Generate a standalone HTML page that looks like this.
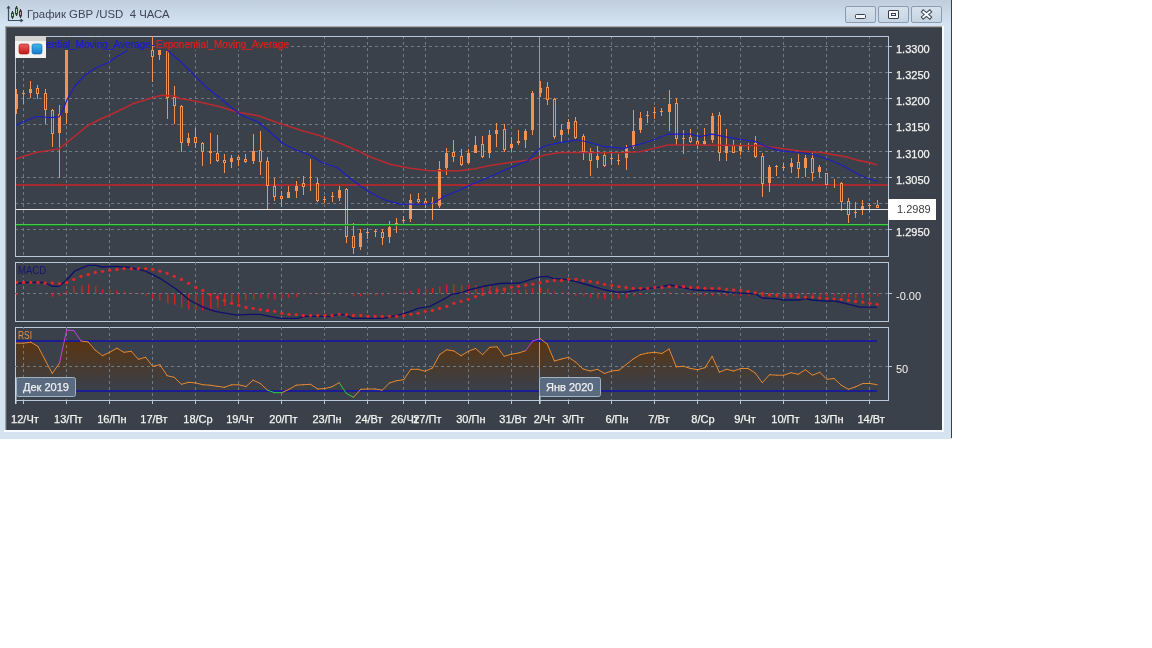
<!DOCTYPE html>
<html><head><meta charset="utf-8"><style>
html,body{margin:0;padding:0;background:#fff;width:1152px;height:648px;overflow:hidden;font-family:"Liberation Sans",sans-serif}
#win{position:absolute;left:0;top:0;width:952px;height:439px;background:linear-gradient(#c0cedc,#d4e4f2 25px,#d5e3f1 30px);}
#rb{position:absolute;left:951px;top:0;width:1px;height:438px;background:#3c3c44}
#title{position:absolute;left:27px;top:8px;will-change:transform;font-size:11.4px;color:#404458;white-space:pre}
#dark{position:absolute;left:5px;top:26px;width:937px;height:404px;background:#3a414a;}
#wl{position:absolute;left:942px;top:26px;width:2px;height:406px;background:#f8fbff}
#wb{position:absolute;left:4px;top:430px;width:940px;height:2px;background:#f8fbff}
.btn{position:absolute;top:6px;width:29px;height:15px;border:1px solid #8c9cae;border-radius:2px;background:linear-gradient(#d6e1ec,#c6d4e3)}
</style></head><body>
<div id="win">
<div id="rb"></div>
<svg width="28" height="26" style="position:absolute;left:0;top:0" viewBox="0 0 28 26">
<path d="M8.5 6.5V20.5H22.5" stroke="#3c4c5c" stroke-width="1.2" fill="none"/>
<path d="M7 8.5L8.5 6.5L10 8.5" stroke="#3c4c5c" stroke-width="1.1" fill="none"/>
<path d="M20.5 19L22.5 20.5L20.5 22" stroke="#3c4c5c" stroke-width="1.1" fill="none"/>
<path d="M12.5 11V19M16.5 6V16M20.5 9V18" stroke="#2c3830" stroke-width="1.1"/>
<rect x="11.5" y="13" width="2" height="4" fill="#b8dcb8" stroke="#2c4a30" stroke-width="1"/>
<rect x="15.5" y="8" width="2" height="6" fill="#b8dcb8" stroke="#2c4a30" stroke-width="1"/>
<rect x="19.5" y="11" width="2" height="5" fill="#c8a0b0" stroke="#4a3040" stroke-width="1"/>
</svg>
<div id="title">График GBP /USD  4 ЧАСА</div>
<div class="btn" style="left:845px"><div style="position:absolute;left:9px;top:7px;width:9px;height:3px;border:1px solid #384050;border-radius:1.5px;background:#f4f6f8"></div></div>
<div class="btn" style="left:878px"><div style="position:absolute;left:9px;top:3px;width:9px;height:7px;border:1px solid #384050;border-radius:1px;background:#f4f6f8"><div style="position:absolute;left:2px;top:2px;width:3px;height:1px;border:1px solid #384050"></div></div></div>
<div class="btn" style="left:911px"><svg width="29" height="15" style="position:absolute;left:0;top:0"><path d="M11.3 4.8L17.7 10.2M17.7 4.8L11.3 10.2" stroke="#384050" stroke-width="3.8" stroke-linecap="square"/><path d="M11.3 4.8L17.7 10.2M17.7 4.8L11.3 10.2" stroke="#f6f8fa" stroke-width="1.9" stroke-linecap="square"/></svg></div>
<div id="dark"></div>
<div id="wl"></div><div id="wb"></div><div style="position:absolute;left:5px;top:26px;width:937px;height:1px;background:#a4a6a8"></div><div style="position:absolute;left:6px;top:27px;width:936px;height:1px;background:#5a5c60"></div><div style="position:absolute;left:7px;top:28px;width:935px;height:1px;background:#363c44"></div><div style="position:absolute;left:5px;top:26px;width:1px;height:404px;background:#9ea2a6"></div><div style="position:absolute;left:6px;top:27px;width:1px;height:403px;background:#5a5e62"></div><div style="position:absolute;left:7px;top:28px;width:1px;height:402px;background:#383e46"></div>
<svg width="952" height="438" viewBox="0 0 952 438" style="position:absolute;left:0;top:0;will-change:transform"><defs><clipPath id="cpMain"><rect x="16" y="37" width="872" height="219"/></clipPath><clipPath id="cpBody"><rect x="16" y="50" width="872" height="206"/></clipPath><clipPath id="cpMacd"><rect x="16" y="263" width="872" height="58"/></clipPath><clipPath id="cpRsi"><rect x="16" y="328" width="872" height="72"/></clipPath><clipPath id="cpRsiFill"><rect x="16" y="341" width="872" height="50"/></clipPath><linearGradient id="gRsi" x1="0" y1="341" x2="0" y2="392" gradientUnits="userSpaceOnUse"><stop offset="0" stop-color="#5a3410"/><stop offset="0.45" stop-color="#4a3a2c"/><stop offset="0.85" stop-color="#3d3f45"/><stop offset="1" stop-color="#3a414a"/></linearGradient><linearGradient id="gSq1" x1="0" y1="0" x2="0" y2="1"><stop offset="0" stop-color="#f06060"/><stop offset="1" stop-color="#c01818"/></linearGradient><linearGradient id="gSq2" x1="0" y1="0" x2="0" y2="1"><stop offset="0" stop-color="#40b8f0"/><stop offset="1" stop-color="#1878c8"/></linearGradient></defs><path d="M23.5 36V256 M66.5 36V256 M109.5 36V256 M152.5 36V256 M195.5 36V256 M238.5 36V256 M281.5 36V256 M324.5 36V256 M367.5 36V256 M403.5 36V256 M425.5 36V256 M468.5 36V256 M511.5 36V256 M568.5 36V256 M611.5 36V256 M654.5 36V256 M697.5 36V256 M740.5 36V256 M783.5 36V256 M826.5 36V256 M869.5 36V256" stroke="#6e7a84" stroke-width="1" stroke-dasharray="3 3" fill="none" shape-rendering="crispEdges"/><path d="M15 46.5H888 M15 72.5H888 M15 98.5H888 M15 124.5H888 M15 151.5H888 M15 177.5H888 M15 203.5H888 M15 229.5H888" stroke="#6e7a84" stroke-width="1" stroke-dasharray="3 3" fill="none" shape-rendering="crispEdges"/><rect x="539" y="37" width="1" height="219" fill="#8e9cac"/><rect x="16" y="184" width="872" height="2" fill="#a82a30"/><g clip-path="url(#cpBody)" shape-rendering="crispEdges"><rect x="16" y="89.3" width="1" height="25.0" fill="#f39252"/><rect x="15" y="93.5" width="3" height="15.8" fill="#f39252"/><rect x="23" y="90.0" width="1" height="14.0" fill="#f39252"/><rect x="22" y="93.0" width="3" height="1" fill="#f39252"/><rect x="30" y="81.0" width="1" height="16.7" fill="#f39252"/><rect x="29" y="88.5" width="3" height="4.2" fill="#f39252"/><rect x="37" y="85.0" width="1" height="13.5" fill="#f39252"/><rect x="36.5" y="88.5" width="2" height="4.5" fill="#3a414a" stroke="#f39252" stroke-width="1"/><rect x="45" y="89.3" width="1" height="34.2" fill="#f39252"/><rect x="44.5" y="93.2" width="2" height="16.3" fill="#3a414a" stroke="#f39252" stroke-width="1"/><rect x="52" y="108.5" width="1" height="38.0" fill="#f39252"/><rect x="51.5" y="110.5" width="2" height="23.0" fill="#3a414a" stroke="#f39252" stroke-width="1"/><rect x="59" y="105.0" width="1" height="73.0" fill="#f39252"/><rect x="58" y="114.0" width="3" height="18.7" fill="#f39252"/><rect x="66" y="50.0" width="1" height="73.5" fill="#f39252"/><rect x="65" y="50.0" width="3" height="62.7" fill="#f39252"/><rect x="152" y="50.0" width="1" height="31.8" fill="#f39252"/><rect x="151.5" y="50.5" width="2" height="6.0" fill="#3a414a" stroke="#f39252" stroke-width="1"/><rect x="159" y="50.0" width="1" height="10.0" fill="#f39252"/><rect x="158" y="50.0" width="3" height="5.0" fill="#f39252"/><rect x="167" y="50.0" width="1" height="69.0" fill="#f39252"/><rect x="166.5" y="51.5" width="2" height="45.7" fill="#3a414a" stroke="#f39252" stroke-width="1"/><rect x="174" y="86.0" width="1" height="37.5" fill="#f39252"/><rect x="173.5" y="97.5" width="2" height="8.0" fill="#3a414a" stroke="#f39252" stroke-width="1"/><rect x="181" y="105.0" width="1" height="46.7" fill="#f39252"/><rect x="180.5" y="106.5" width="2" height="36.3" fill="#3a414a" stroke="#f39252" stroke-width="1"/><rect x="188" y="132.5" width="1" height="13.3" fill="#f39252"/><rect x="187" y="137.5" width="3" height="5.0" fill="#f39252"/><rect x="195" y="127.5" width="1" height="20.0" fill="#f39252"/><rect x="194.5" y="137.2" width="2" height="5.6" fill="#3a414a" stroke="#f39252" stroke-width="1"/><rect x="202" y="141.7" width="1" height="24.1" fill="#f39252"/><rect x="201.5" y="143.0" width="2" height="8.2" fill="#3a414a" stroke="#f39252" stroke-width="1"/><rect x="210" y="132.5" width="1" height="31.7" fill="#f39252"/><rect x="209.5" y="151.3" width="2" height="1.5" fill="#3a414a" stroke="#f39252" stroke-width="1"/><rect x="217" y="135.0" width="1" height="26.7" fill="#f39252"/><rect x="216.5" y="153.0" width="2" height="7.3" fill="#3a414a" stroke="#f39252" stroke-width="1"/><rect x="224" y="154.2" width="1" height="19.1" fill="#f39252"/><rect x="223.5" y="160.5" width="2" height="1.5" fill="#3a414a" stroke="#f39252" stroke-width="1"/><rect x="231" y="155.0" width="1" height="12.5" fill="#f39252"/><rect x="230" y="158.3" width="3" height="3.4" fill="#f39252"/><rect x="238" y="155.0" width="1" height="10.8" fill="#f39252"/><rect x="237.5" y="157.5" width="2" height="2.0" fill="#3a414a" stroke="#f39252" stroke-width="1"/><rect x="245" y="154.2" width="1" height="8.3" fill="#f39252"/><rect x="244.5" y="159.7" width="2" height="1.5" fill="#3a414a" stroke="#f39252" stroke-width="1"/><rect x="253" y="134.2" width="1" height="30.0" fill="#f39252"/><rect x="252" y="150.8" width="3" height="10.0" fill="#f39252"/><rect x="260" y="130.8" width="1" height="44.2" fill="#f39252"/><rect x="259.5" y="150.5" width="2" height="10.7" fill="#3a414a" stroke="#f39252" stroke-width="1"/><rect x="267" y="156.7" width="1" height="52.5" fill="#f39252"/><rect x="266.5" y="161.3" width="2" height="24.0" fill="#3a414a" stroke="#f39252" stroke-width="1"/><rect x="274" y="178.3" width="1" height="22.5" fill="#f39252"/><rect x="273.5" y="186.3" width="2" height="9.9" fill="#3a414a" stroke="#f39252" stroke-width="1"/><rect x="281" y="190.8" width="1" height="15.9" fill="#f39252"/><rect x="280.5" y="196.3" width="2" height="1.9" fill="#3a414a" stroke="#f39252" stroke-width="1"/><rect x="288" y="185.8" width="1" height="12.5" fill="#f39252"/><rect x="287" y="191.7" width="3" height="5.8" fill="#f39252"/><rect x="296" y="180.8" width="1" height="16.7" fill="#f39252"/><rect x="295" y="185.8" width="3" height="5.0" fill="#f39252"/><rect x="303" y="175.8" width="1" height="19.2" fill="#f39252"/><rect x="302.5" y="183.8" width="2" height="2.4" fill="#3a414a" stroke="#f39252" stroke-width="1"/><rect x="310" y="159.2" width="1" height="31.6" fill="#f39252"/><rect x="309" y="177.0" width="3" height="1" fill="#f39252"/><rect x="317" y="178.3" width="1" height="23.4" fill="#f39252"/><rect x="316.5" y="183.8" width="2" height="16.5" fill="#3a414a" stroke="#f39252" stroke-width="1"/><rect x="324" y="195.8" width="1" height="7.5" fill="#f39252"/><rect x="323" y="199.0" width="3" height="1" fill="#f39252"/><rect x="332" y="191.7" width="1" height="10.0" fill="#f39252"/><rect x="331" y="196.0" width="3" height="1" fill="#f39252"/><rect x="339" y="185.8" width="1" height="15.0" fill="#f39252"/><rect x="338" y="190.0" width="3" height="8.0" fill="#f39252"/><rect x="346" y="188.3" width="1" height="54.2" fill="#f39252"/><rect x="345.5" y="189.7" width="2" height="46.5" fill="#3a414a" stroke="#f39252" stroke-width="1"/><rect x="353" y="223.3" width="1" height="30.9" fill="#f39252"/><rect x="352.5" y="236.3" width="2" height="11.5" fill="#3a414a" stroke="#f39252" stroke-width="1"/><rect x="360" y="229.2" width="1" height="20.8" fill="#f39252"/><rect x="359" y="232.5" width="3" height="14.2" fill="#f39252"/><rect x="367" y="228.3" width="1" height="10.9" fill="#f39252"/><rect x="366" y="232.0" width="3" height="1" fill="#f39252"/><rect x="375" y="229.2" width="1" height="7.5" fill="#f39252"/><rect x="374" y="231.0" width="3" height="1" fill="#f39252"/><rect x="382" y="229.2" width="1" height="15.8" fill="#f39252"/><rect x="381.5" y="232.2" width="2" height="5.6" fill="#3a414a" stroke="#f39252" stroke-width="1"/><rect x="389" y="220.8" width="1" height="21.7" fill="#f39252"/><rect x="388" y="226.7" width="3" height="10.0" fill="#f39252"/><rect x="396" y="218.3" width="1" height="14.2" fill="#f39252"/><rect x="395" y="223.3" width="3" height="2.0" fill="#f39252"/><rect x="403" y="215.8" width="1" height="6.7" fill="#f39252"/><rect x="402" y="220.0" width="3" height="1" fill="#f39252"/><rect x="410" y="194.2" width="1" height="27.5" fill="#f39252"/><rect x="409" y="200.0" width="3" height="19.2" fill="#f39252"/><rect x="418" y="193.3" width="1" height="10.0" fill="#f39252"/><rect x="417.5" y="199.7" width="2" height="1.8" fill="#3a414a" stroke="#f39252" stroke-width="1"/><rect x="425" y="198.3" width="1" height="10.0" fill="#f39252"/><rect x="424.5" y="201.3" width="2" height="2.4" fill="#3a414a" stroke="#f39252" stroke-width="1"/><rect x="432" y="196.7" width="1" height="23.3" fill="#f39252"/><rect x="431.5" y="202.2" width="2" height="1.0" fill="#3a414a" stroke="#f39252" stroke-width="1"/><rect x="439" y="160.8" width="1" height="46.7" fill="#f39252"/><rect x="438" y="169.2" width="3" height="36.6" fill="#f39252"/><rect x="446" y="147.5" width="1" height="27.5" fill="#f39252"/><rect x="445" y="152.5" width="3" height="15.8" fill="#f39252"/><rect x="453" y="140.0" width="1" height="21.7" fill="#f39252"/><rect x="452.5" y="152.2" width="2" height="4.0" fill="#3a414a" stroke="#f39252" stroke-width="1"/><rect x="461" y="149.2" width="1" height="16.6" fill="#f39252"/><rect x="460.5" y="156.3" width="2" height="8.2" fill="#3a414a" stroke="#f39252" stroke-width="1"/><rect x="468" y="149.2" width="1" height="15.0" fill="#f39252"/><rect x="467" y="152.5" width="3" height="10.0" fill="#f39252"/><rect x="475" y="135.8" width="1" height="17.5" fill="#f39252"/><rect x="474" y="145.0" width="3" height="7.5" fill="#f39252"/><rect x="482" y="135.8" width="1" height="22.5" fill="#f39252"/><rect x="481.5" y="144.7" width="2" height="11.5" fill="#3a414a" stroke="#f39252" stroke-width="1"/><rect x="489" y="130.0" width="1" height="28.3" fill="#f39252"/><rect x="488" y="135.0" width="3" height="18.3" fill="#f39252"/><rect x="496" y="123.3" width="1" height="23.4" fill="#f39252"/><rect x="495" y="130.0" width="3" height="4.2" fill="#f39252"/><rect x="504" y="124.2" width="1" height="27.5" fill="#f39252"/><rect x="503.5" y="129.7" width="2" height="19.8" fill="#3a414a" stroke="#f39252" stroke-width="1"/><rect x="511" y="136.7" width="1" height="15.0" fill="#f39252"/><rect x="510" y="144.2" width="3" height="4.1" fill="#f39252"/><rect x="518" y="130.0" width="1" height="15.0" fill="#f39252"/><rect x="517" y="140.8" width="3" height="2.5" fill="#f39252"/><rect x="525" y="129.2" width="1" height="18.3" fill="#f39252"/><rect x="524" y="130.8" width="3" height="9.2" fill="#f39252"/><rect x="532" y="90.8" width="1" height="44.2" fill="#f39252"/><rect x="531" y="93.3" width="3" height="36.7" fill="#f39252"/><rect x="540" y="80.8" width="1" height="15.9" fill="#f39252"/><rect x="539" y="88.0" width="3" height="5.3" fill="#f39252"/><rect x="547" y="81.7" width="1" height="23.3" fill="#f39252"/><rect x="546.5" y="87.2" width="2" height="12.3" fill="#3a414a" stroke="#f39252" stroke-width="1"/><rect x="554" y="98.3" width="1" height="40.9" fill="#f39252"/><rect x="553.5" y="99.7" width="2" height="36.5" fill="#3a414a" stroke="#f39252" stroke-width="1"/><rect x="561" y="124.2" width="1" height="18.3" fill="#f39252"/><rect x="560" y="130.0" width="3" height="5.0" fill="#f39252"/><rect x="568" y="119.2" width="1" height="15.0" fill="#f39252"/><rect x="567" y="121.7" width="3" height="7.5" fill="#f39252"/><rect x="575" y="116.7" width="1" height="22.5" fill="#f39252"/><rect x="574.5" y="121.3" width="2" height="15.7" fill="#3a414a" stroke="#f39252" stroke-width="1"/><rect x="583" y="134.2" width="1" height="25.8" fill="#f39252"/><rect x="582.5" y="136.3" width="2" height="14.9" fill="#3a414a" stroke="#f39252" stroke-width="1"/><rect x="590" y="148.3" width="1" height="27.5" fill="#f39252"/><rect x="589.5" y="153.0" width="2" height="7.3" fill="#3a414a" stroke="#f39252" stroke-width="1"/><rect x="597" y="145.8" width="1" height="21.7" fill="#f39252"/><rect x="596" y="155.8" width="3" height="4.2" fill="#f39252"/><rect x="604" y="151.7" width="1" height="15.0" fill="#f39252"/><rect x="603.5" y="155.5" width="2" height="9.8" fill="#3a414a" stroke="#f39252" stroke-width="1"/><rect x="611" y="151.7" width="1" height="13.3" fill="#f39252"/><rect x="610" y="158.0" width="3" height="1" fill="#f39252"/><rect x="618" y="154.2" width="1" height="10.8" fill="#f39252"/><rect x="617" y="159.5" width="3" height="1" fill="#f39252"/><rect x="626" y="145.0" width="1" height="25.0" fill="#f39252"/><rect x="625" y="147.5" width="3" height="10.8" fill="#f39252"/><rect x="633" y="110.0" width="1" height="39.2" fill="#f39252"/><rect x="632" y="130.8" width="3" height="15.9" fill="#f39252"/><rect x="640" y="111.7" width="1" height="21.6" fill="#f39252"/><rect x="639" y="118.3" width="3" height="11.7" fill="#f39252"/><rect x="647" y="110.8" width="1" height="11.7" fill="#f39252"/><rect x="646" y="115.0" width="3" height="1" fill="#f39252"/><rect x="654" y="106.7" width="1" height="12.5" fill="#f39252"/><rect x="653" y="112.0" width="3" height="1" fill="#f39252"/><rect x="661" y="107.5" width="1" height="8.3" fill="#f39252"/><rect x="660" y="111.0" width="3" height="1" fill="#f39252"/><rect x="669" y="90.0" width="1" height="40.8" fill="#f39252"/><rect x="668" y="104.2" width="3" height="7.5" fill="#f39252"/><rect x="676" y="98.3" width="1" height="46.7" fill="#f39252"/><rect x="675.5" y="103.0" width="2" height="35.7" fill="#3a414a" stroke="#f39252" stroke-width="1"/><rect x="683" y="130.0" width="1" height="24.2" fill="#f39252"/><rect x="682" y="138.0" width="3" height="1" fill="#f39252"/><rect x="690" y="129.2" width="1" height="13.3" fill="#f39252"/><rect x="689.5" y="137.2" width="2" height="4.0" fill="#3a414a" stroke="#f39252" stroke-width="1"/><rect x="697" y="133.3" width="1" height="15.9" fill="#f39252"/><rect x="696.5" y="141.3" width="2" height="3.2" fill="#3a414a" stroke="#f39252" stroke-width="1"/><rect x="704" y="128.3" width="1" height="16.7" fill="#f39252"/><rect x="703" y="140.8" width="3" height="3.4" fill="#f39252"/><rect x="712" y="112.5" width="1" height="30.0" fill="#f39252"/><rect x="711" y="115.8" width="3" height="24.2" fill="#f39252"/><rect x="719" y="111.7" width="1" height="49.1" fill="#f39252"/><rect x="718.5" y="115.5" width="2" height="37.3" fill="#3a414a" stroke="#f39252" stroke-width="1"/><rect x="726" y="129.2" width="1" height="31.6" fill="#f39252"/><rect x="725" y="145.8" width="3" height="6.7" fill="#f39252"/><rect x="733" y="140.0" width="1" height="13.3" fill="#f39252"/><rect x="732.5" y="145.5" width="2" height="6.5" fill="#3a414a" stroke="#f39252" stroke-width="1"/><rect x="740" y="143.3" width="1" height="11.7" fill="#f39252"/><rect x="739" y="145.8" width="3" height="5.0" fill="#f39252"/><rect x="748" y="142.5" width="1" height="7.5" fill="#f39252"/><rect x="747" y="144.5" width="3" height="1" fill="#f39252"/><rect x="755" y="135.8" width="1" height="22.5" fill="#f39252"/><rect x="754.5" y="143.0" width="2" height="13.2" fill="#3a414a" stroke="#f39252" stroke-width="1"/><rect x="762" y="153.3" width="1" height="43.4" fill="#f39252"/><rect x="761.5" y="156.3" width="2" height="27.4" fill="#3a414a" stroke="#f39252" stroke-width="1"/><rect x="769" y="165.0" width="1" height="26.7" fill="#f39252"/><rect x="768" y="166.7" width="3" height="16.6" fill="#f39252"/><rect x="776" y="165.0" width="1" height="10.8" fill="#f39252"/><rect x="775" y="166.0" width="3" height="1" fill="#f39252"/><rect x="783" y="163.3" width="1" height="7.5" fill="#f39252"/><rect x="782" y="167.0" width="3" height="1" fill="#f39252"/><rect x="791" y="157.5" width="1" height="15.0" fill="#f39252"/><rect x="790" y="162.5" width="3" height="4.2" fill="#f39252"/><rect x="798" y="154.2" width="1" height="23.3" fill="#f39252"/><rect x="797.5" y="162.5" width="2" height="6.0" fill="#3a414a" stroke="#f39252" stroke-width="1"/><rect x="805" y="155.0" width="1" height="21.7" fill="#f39252"/><rect x="804" y="158.3" width="3" height="9.2" fill="#f39252"/><rect x="812" y="152.5" width="1" height="28.3" fill="#f39252"/><rect x="811.5" y="158.0" width="2" height="14.0" fill="#3a414a" stroke="#f39252" stroke-width="1"/><rect x="819" y="165.0" width="1" height="12.5" fill="#f39252"/><rect x="818" y="166.7" width="3" height="5.0" fill="#f39252"/><rect x="826" y="172.5" width="1" height="12.5" fill="#f39252"/><rect x="825.5" y="173.8" width="2" height="10.7" fill="#3a414a" stroke="#f39252" stroke-width="1"/><rect x="834" y="178.7" width="1" height="9.3" fill="#f39252"/><rect x="841" y="181.7" width="1" height="29.1" fill="#f39252"/><rect x="840.5" y="183.8" width="2" height="17.4" fill="#3a414a" stroke="#f39252" stroke-width="1"/><rect x="848" y="197.5" width="1" height="25.8" fill="#f39252"/><rect x="847.5" y="201.3" width="2" height="13.2" fill="#3a414a" stroke="#f39252" stroke-width="1"/><rect x="855" y="201.7" width="1" height="16.6" fill="#f39252"/><rect x="854" y="211.7" width="3" height="1.6" fill="#f39252"/><rect x="862" y="200.0" width="1" height="15.0" fill="#f39252"/><rect x="861" y="205.8" width="3" height="4.2" fill="#f39252"/><rect x="869" y="202.5" width="1" height="9.2" fill="#f39252"/><rect x="868" y="204.5" width="3" height="1" fill="#f39252"/><rect x="877" y="200.0" width="1" height="8.3" fill="#f39252"/><rect x="876.5" y="205.5" width="2" height="1.5" fill="#3a414a" stroke="#f39252" stroke-width="1"/></g><rect x="152" y="37" width="1" height="13" fill="#f39252"/><rect x="16" y="224" width="872" height="1" fill="#4cc44e"/><rect x="16" y="225" width="872" height="1" fill="#10801a"/><rect x="16" y="209" width="872" height="1" fill="#e8e8e8"/><path d="M16.0 159.0 L23.0 156.5 L37.0 152.3 L59.0 149.0 L66.7 142.7 L75.0 136.0 L88.3 125.2 L100.0 119.3 L108.3 115.7 L125.0 107.7 L133.3 103.5 L150.0 98.5 L161.7 95.2 L175.0 96.3 L180.0 98.5 L195.0 101.0 L220.0 106.8 L238.0 112.3 L258.0 115.7 L280.0 123.5 L300.0 130.0 L320.0 135.8 L340.0 143.3 L360.0 151.7 L370.0 156.7 L390.0 164.2 L410.0 168.3 L430.0 170.8 L460.0 170.8 L475.0 168.7 L490.0 165.5 L515.0 161.7 L530.0 160.0 L545.0 155.0 L560.0 152.5 L580.0 152.5 L600.0 152.8 L624.0 152.5 L640.0 151.7 L668.0 145.0 L700.0 145.0 L760.0 145.8 L780.0 148.3 L800.0 151.0 L822.5 152.5 L833.3 154.6 L845.8 156.7 L858.3 160.4 L870.8 162.9 L877.0 165.0" stroke="#b82a30" stroke-width="1.6" fill="none" stroke-linejoin="round" clip-path="url(#cpMain)"/><path d="M15.8 125.2 L23.3 121.8 L36.7 116.5 L50.0 117.7 L59.2 116.8 L63.3 109.3 L66.7 100.2 L75.0 86.0 L83.3 76.8 L91.7 70.2 L100.0 66.0 L108.3 62.7 L116.7 56.8 L127.5 50.2 L135.0 44.0 L140.0 36.0 L160.0 36.0 L166.7 50.0 L180.0 61.0 L195.0 76.0 L205.0 86.0 L238.0 112.7 L245.0 116.8 L258.0 121.8 L265.0 127.7 L283.0 143.5 L296.0 150.0 L310.0 155.0 L322.0 162.5 L337.0 167.5 L350.0 178.3 L360.0 185.8 L370.0 192.5 L385.0 200.0 L400.0 204.2 L425.0 204.2 L433.0 203.0 L446.0 195.8 L460.0 190.0 L472.0 184.2 L490.0 176.7 L505.0 170.0 L528.0 160.8 L540.0 148.3 L548.0 145.0 L565.0 141.7 L578.0 140.0 L590.0 142.5 L604.0 146.7 L624.0 148.3 L640.0 144.2 L655.0 139.2 L668.0 134.2 L690.0 134.2 L700.0 136.7 L712.0 134.2 L724.0 136.7 L745.0 140.0 L756.0 141.7 L766.0 146.7 L780.0 150.8 L800.0 152.5 L815.0 155.0 L830.0 160.0 L845.0 166.7 L855.0 172.5 L865.0 177.5 L877.0 181.3" stroke="#1e1ec4" stroke-width="1.2" fill="none" stroke-linejoin="round" clip-path="url(#cpMain)"/><rect x="46" y="37" width="106" height="13" fill="#3a414a"/><rect x="155" y="37" width="135" height="13" fill="#3a414a"/><text x="46" y="48" font-family="Liberation Sans" font-size="10" fill="#1c1cd0" stroke="#1c1cd0" stroke-width="0.25" textLength="108" lengthAdjust="spacing">ential_Moving_Average-</text><text x="156" y="48" font-family="Liberation Sans" font-size="10" fill="#e01e1e" stroke="#e01e1e" stroke-width="0.25" textLength="133" lengthAdjust="spacing">Exponential_Moving_Average</text><rect x="15.5" y="36.5" width="873" height="220" fill="none" stroke="#b8c8d8" stroke-width="1" shape-rendering="crispEdges"/><rect x="66" y="36" width="1" height="1" fill="#f39252" opacity="0.7"/><rect x="95" y="36" width="1" height="1" fill="#f39252" opacity="0.5"/><rect x="103" y="36" width="1" height="1" fill="#f39252" opacity="0.5"/><rect x="152" y="36" width="1" height="1" fill="#f39252"/><rect x="15.5" y="262.5" width="873" height="59" fill="none" stroke="#b8c8d8" stroke-width="1" shape-rendering="crispEdges"/><rect x="15.5" y="327.5" width="873" height="73" fill="none" stroke="#b8c8d8" stroke-width="1" shape-rendering="crispEdges"/><path d="M888 46.5H892 M888 72.5H892 M888 98.5H892 M888 124.5H892 M888 151.5H892 M888 177.5H892 M888 203.5H892 M888 229.5H892 M888 293.5H892 M888 366.5H892" stroke="#b8c8d8" stroke-width="1" shape-rendering="crispEdges"/><text x="896" y="52.6" font-family="Liberation Sans" font-size="11" fill="#f4f4f0" stroke="#f4f4f0" stroke-width="0.25">1.3300</text><text x="896" y="78.6" font-family="Liberation Sans" font-size="11" fill="#f4f4f0" stroke="#f4f4f0" stroke-width="0.25">1.3250</text><text x="896" y="104.6" font-family="Liberation Sans" font-size="11" fill="#f4f4f0" stroke="#f4f4f0" stroke-width="0.25">1.3200</text><text x="896" y="130.6" font-family="Liberation Sans" font-size="11" fill="#f4f4f0" stroke="#f4f4f0" stroke-width="0.25">1.3150</text><text x="896" y="157.6" font-family="Liberation Sans" font-size="11" fill="#f4f4f0" stroke="#f4f4f0" stroke-width="0.25">1.3100</text><text x="896" y="183.6" font-family="Liberation Sans" font-size="11" fill="#f4f4f0" stroke="#f4f4f0" stroke-width="0.25">1.3050</text><text x="896" y="235.6" font-family="Liberation Sans" font-size="11" fill="#f4f4f0" stroke="#f4f4f0" stroke-width="0.25">1.2950</text><rect x="888" y="199" width="48" height="21" fill="#ffffff"/><text x="897" y="213" font-family="Liberation Sans" font-size="11" fill="#3a3a3a">1.2989</text><text x="896" y="300" font-family="Liberation Sans" font-size="11" fill="#f4f4f0">-0.00</text><text x="896" y="373" font-family="Liberation Sans" font-size="11" fill="#f4f4f0">50</text><path d="M23.5 262V321 M66.5 262V321 M109.5 262V321 M152.5 262V321 M195.5 262V321 M238.5 262V321 M281.5 262V321 M324.5 262V321 M367.5 262V321 M403.5 262V321 M425.5 262V321 M468.5 262V321 M511.5 262V321 M568.5 262V321 M611.5 262V321 M654.5 262V321 M697.5 262V321 M740.5 262V321 M783.5 262V321 M826.5 262V321 M869.5 262V321" stroke="#6e7a84" stroke-width="1" stroke-dasharray="3 3" fill="none" shape-rendering="crispEdges"/><rect x="539" y="263" width="1" height="58" fill="#8e9cac"/><path d="M15 293.5H888" stroke="#6e7a84" stroke-width="1" stroke-dasharray="3 3" fill="none" shape-rendering="crispEdges"/><g clip-path="url(#cpMacd)"><rect x="16" y="293.5" width="1.5" height="1.6" fill="#c82424"/><rect x="52" y="293.5" width="1.5" height="3.3" fill="#c82424"/><rect x="59" y="293.5" width="1.5" height="2.2" fill="#c82424"/><rect x="66" y="291.1" width="1.5" height="2.4" fill="#c82424"/><rect x="73" y="286.1" width="1.5" height="7.4" fill="#c82424"/><rect x="81" y="285.5" width="1.5" height="8.0" fill="#c82424"/><rect x="88" y="284.3" width="1.5" height="9.2" fill="#c82424"/><rect x="95" y="286.3" width="1.5" height="7.2" fill="#c82424"/><rect x="102" y="289.2" width="1.5" height="4.3" fill="#c82424"/><rect x="109" y="289.8" width="1.5" height="3.7" fill="#c82424"/><rect x="116" y="290.4" width="1.5" height="3.1" fill="#c82424"/><rect x="124" y="291.8" width="1.5" height="1.7" fill="#c82424"/><rect x="131" y="292.6" width="1.5" height="0.9" fill="#c82424"/><rect x="138" y="293.5" width="1.5" height="0.6" fill="#c82424"/><rect x="145" y="293.5" width="1.5" height="2.4" fill="#c82424"/><rect x="152" y="293.5" width="1.5" height="5.2" fill="#c82424"/><rect x="159" y="293.5" width="1.5" height="7.0" fill="#c82424"/><rect x="167" y="293.5" width="1.5" height="9.7" fill="#c82424"/><rect x="174" y="293.5" width="1.5" height="11.5" fill="#c82424"/><rect x="181" y="293.5" width="1.5" height="14.0" fill="#c82424"/><rect x="188" y="293.5" width="1.5" height="16.0" fill="#c82424"/><rect x="195" y="293.5" width="1.5" height="16.0" fill="#c82424"/><rect x="202" y="293.5" width="1.5" height="16.7" fill="#c82424"/><rect x="210" y="293.5" width="1.5" height="15.3" fill="#c82424"/><rect x="217" y="293.5" width="1.5" height="14.2" fill="#c82424"/><rect x="224" y="293.5" width="1.5" height="12.5" fill="#c82424"/><rect x="231" y="293.5" width="1.5" height="10.9" fill="#c82424"/><rect x="238" y="293.5" width="1.5" height="9.6" fill="#c82424"/><rect x="245" y="293.5" width="1.5" height="7.1" fill="#c82424"/><rect x="253" y="293.5" width="1.5" height="6.0" fill="#c82424"/><rect x="260" y="293.5" width="1.5" height="4.7" fill="#c82424"/><rect x="267" y="293.5" width="1.5" height="5.1" fill="#c82424"/><rect x="274" y="293.5" width="1.5" height="5.9" fill="#c82424"/><rect x="281" y="293.5" width="1.5" height="5.0" fill="#c82424"/><rect x="288" y="293.5" width="1.5" height="4.0" fill="#c82424"/><rect x="296" y="293.5" width="1.5" height="3.6" fill="#c82424"/><rect x="303" y="293.5" width="1.5" height="1.2" fill="#c82424"/><rect x="310" y="293.5" width="1.5" height="0.8" fill="#c82424"/><rect x="317" y="293.5" width="1.5" height="0.8" fill="#c82424"/><rect x="324" y="293.5" width="1.5" height="0.8" fill="#c82424"/><rect x="346" y="293.5" width="1.5" height="0.7" fill="#c82424"/><rect x="353" y="293.5" width="1.5" height="2.8" fill="#c82424"/><rect x="360" y="293.5" width="1.5" height="2.8" fill="#c82424"/><rect x="367" y="293.5" width="1.5" height="2.0" fill="#c82424"/><rect x="375" y="293.5" width="1.5" height="2.0" fill="#c82424"/><rect x="382" y="293.5" width="1.5" height="2.0" fill="#c82424"/><rect x="389" y="293.5" width="1.5" height="0.6" fill="#c82424"/><rect x="396" y="292.6" width="1.5" height="0.9" fill="#c82424"/><rect x="403" y="291.6" width="1.5" height="1.9" fill="#c82424"/><rect x="410" y="290.5" width="1.5" height="3.0" fill="#c82424"/><rect x="418" y="288.5" width="1.5" height="5.0" fill="#c82424"/><rect x="425" y="289.3" width="1.5" height="4.2" fill="#c82424"/><rect x="432" y="288.0" width="1.5" height="5.5" fill="#c82424"/><rect x="439" y="286.5" width="1.5" height="7.0" fill="#c82424"/><rect x="446" y="284.6" width="1.5" height="8.9" fill="#c82424"/><rect x="453" y="284.2" width="1.5" height="9.3" fill="#c82424"/><rect x="461" y="284.8" width="1.5" height="8.7" fill="#c82424"/><rect x="468" y="284.5" width="1.5" height="9.0" fill="#c82424"/><rect x="475" y="285.2" width="1.5" height="8.3" fill="#c82424"/><rect x="482" y="285.8" width="1.5" height="7.7" fill="#c82424"/><rect x="489" y="286.0" width="1.5" height="7.5" fill="#c82424"/><rect x="496" y="287.0" width="1.5" height="6.5" fill="#c82424"/><rect x="504" y="287.6" width="1.5" height="5.9" fill="#c82424"/><rect x="511" y="289.5" width="1.5" height="4.0" fill="#c82424"/><rect x="518" y="290.2" width="1.5" height="3.3" fill="#c82424"/><rect x="525" y="289.4" width="1.5" height="4.1" fill="#c82424"/><rect x="532" y="288.2" width="1.5" height="5.3" fill="#c82424"/><rect x="540" y="287.6" width="1.5" height="5.9" fill="#c82424"/><rect x="547" y="288.6" width="1.5" height="4.9" fill="#c82424"/><rect x="554" y="291.4" width="1.5" height="2.1" fill="#c82424"/><rect x="561" y="292.0" width="1.5" height="1.5" fill="#c82424"/><rect x="568" y="293.5" width="1.5" height="0.7" fill="#c82424"/><rect x="575" y="293.5" width="1.5" height="2.2" fill="#c82424"/><rect x="583" y="293.5" width="1.5" height="3.1" fill="#c82424"/><rect x="590" y="293.5" width="1.5" height="4.3" fill="#c82424"/><rect x="597" y="293.5" width="1.5" height="5.0" fill="#c82424"/><rect x="604" y="293.5" width="1.5" height="5.6" fill="#c82424"/><rect x="611" y="293.5" width="1.5" height="5.7" fill="#c82424"/><rect x="618" y="293.5" width="1.5" height="5.5" fill="#c82424"/><rect x="626" y="293.5" width="1.5" height="4.5" fill="#c82424"/><rect x="633" y="293.5" width="1.5" height="2.5" fill="#c82424"/><rect x="640" y="293.5" width="1.5" height="1.4" fill="#c82424"/><rect x="661" y="292.8" width="1.5" height="0.7" fill="#c82424"/><rect x="669" y="292.0" width="1.5" height="1.5" fill="#c82424"/><rect x="683" y="293.5" width="1.5" height="1.1" fill="#c82424"/><rect x="690" y="293.5" width="1.5" height="1.7" fill="#c82424"/><rect x="697" y="293.5" width="1.5" height="2.6" fill="#c82424"/><rect x="704" y="293.5" width="1.5" height="2.0" fill="#c82424"/><rect x="712" y="293.5" width="1.5" height="2.3" fill="#c82424"/><rect x="719" y="293.5" width="1.5" height="2.7" fill="#c82424"/><rect x="726" y="293.5" width="1.5" height="2.8" fill="#c82424"/><rect x="733" y="293.5" width="1.5" height="2.9" fill="#c82424"/><rect x="740" y="293.5" width="1.5" height="2.7" fill="#c82424"/><rect x="748" y="293.5" width="1.5" height="2.2" fill="#c82424"/><rect x="755" y="293.5" width="1.5" height="1.2" fill="#c82424"/><rect x="762" y="293.5" width="1.5" height="4.5" fill="#c82424"/><rect x="769" y="293.5" width="1.5" height="3.7" fill="#c82424"/><rect x="776" y="293.5" width="1.5" height="3.7" fill="#c82424"/><rect x="783" y="293.5" width="1.5" height="4.5" fill="#c82424"/><rect x="791" y="293.5" width="1.5" height="4.0" fill="#c82424"/><rect x="798" y="293.5" width="1.5" height="2.8" fill="#c82424"/><rect x="805" y="293.5" width="1.5" height="1.4" fill="#c82424"/><rect x="812" y="293.5" width="1.5" height="2.8" fill="#c82424"/><rect x="819" y="293.5" width="1.5" height="2.6" fill="#c82424"/><rect x="826" y="293.5" width="1.5" height="2.5" fill="#c82424"/><rect x="834" y="293.5" width="1.5" height="2.2" fill="#c82424"/><rect x="841" y="293.5" width="1.5" height="3.2" fill="#c82424"/><rect x="848" y="293.5" width="1.5" height="3.8" fill="#c82424"/><rect x="855" y="293.5" width="1.5" height="4.8" fill="#c82424"/><rect x="862" y="293.5" width="1.5" height="5.0" fill="#c82424"/><rect x="869" y="293.5" width="1.5" height="3.9" fill="#c82424"/><rect x="877" y="293.5" width="1.5" height="2.9" fill="#c82424"/></g><path d="M16.0 284.2 L23.0 282.5 L45.0 282.5 L52.0 286.3 L59.0 286.3 L66.0 280.8 L75.0 270.8 L88.0 265.3 L96.0 265.3 L102.0 267.0 L116.0 266.3 L130.0 267.5 L145.0 270.8 L155.0 275.8 L160.0 278.3 L175.0 288.3 L180.0 292.2 L190.0 300.5 L203.0 307.2 L215.0 311.3 L237.0 315.2 L250.0 314.3 L260.0 314.3 L270.0 316.3 L280.0 318.3 L297.0 318.3 L305.0 316.3 L330.0 316.3 L337.0 314.7 L345.0 314.7 L352.0 318.3 L383.0 318.3 L400.0 314.7 L410.0 311.7 L418.0 308.3 L430.0 306.3 L445.0 298.5 L452.0 294.3 L460.0 293.0 L470.0 289.7 L485.0 286.0 L500.0 283.5 L520.0 283.0 L530.0 279.7 L540.0 276.8 L547.0 276.3 L553.0 278.3 L565.0 279.3 L575.0 281.3 L590.0 285.5 L605.0 290.0 L617.0 292.2 L625.0 292.2 L635.0 290.5 L650.0 288.3 L660.0 287.2 L670.0 285.0 L680.0 287.2 L695.0 290.0 L710.0 290.5 L720.0 291.0 L730.0 292.7 L755.0 293.8 L762.0 298.0 L778.0 298.8 L782.0 300.0 L800.0 300.0 L805.0 298.5 L812.0 300.0 L825.0 301.0 L835.0 301.0 L850.0 304.7 L860.0 307.2 L877.0 307.2" stroke="#10106a" stroke-width="1.3" fill="none" stroke-linejoin="round" clip-path="url(#cpMacd)"/><g fill="#dc2828" clip-path="url(#cpMacd)"><circle cx="16.5" cy="282.5" r="1.65"/><circle cx="23.6" cy="282.5" r="1.65"/><circle cx="30.8" cy="282.5" r="1.65"/><circle cx="38.0" cy="282.5" r="1.65"/><circle cx="45.1" cy="283.0" r="1.65"/><circle cx="52.3" cy="283.0" r="1.65"/><circle cx="59.5" cy="283.7" r="1.65"/><circle cx="66.7" cy="282.5" r="1.65"/><circle cx="73.8" cy="279.5" r="1.65"/><circle cx="81.0" cy="276.3" r="1.65"/><circle cx="88.2" cy="274.5" r="1.65"/><circle cx="95.3" cy="272.5" r="1.65"/><circle cx="102.5" cy="271.3" r="1.65"/><circle cx="109.7" cy="270.3" r="1.65"/><circle cx="116.9" cy="269.5" r="1.65"/><circle cx="124.0" cy="268.7" r="1.65"/><circle cx="131.2" cy="268.7" r="1.65"/><circle cx="138.4" cy="268.7" r="1.65"/><circle cx="145.6" cy="268.7" r="1.65"/><circle cx="152.7" cy="269.5" r="1.65"/><circle cx="159.9" cy="271.2" r="1.65"/><circle cx="167.1" cy="273.3" r="1.65"/><circle cx="174.2" cy="276.3" r="1.65"/><circle cx="181.4" cy="279.4" r="1.65"/><circle cx="188.6" cy="283.3" r="1.65"/><circle cx="195.8" cy="287.5" r="1.65"/><circle cx="202.9" cy="290.5" r="1.65"/><circle cx="210.1" cy="294.3" r="1.65"/><circle cx="217.3" cy="297.5" r="1.65"/><circle cx="224.4" cy="300.5" r="1.65"/><circle cx="231.6" cy="303.3" r="1.65"/><circle cx="238.8" cy="305.5" r="1.65"/><circle cx="246.0" cy="307.5" r="1.65"/><circle cx="253.1" cy="308.3" r="1.65"/><circle cx="260.3" cy="309.7" r="1.65"/><circle cx="267.5" cy="310.7" r="1.65"/><circle cx="274.6" cy="311.3" r="1.65"/><circle cx="281.8" cy="313.3" r="1.65"/><circle cx="289.0" cy="314.3" r="1.65"/><circle cx="296.2" cy="314.7" r="1.65"/><circle cx="303.3" cy="315.5" r="1.65"/><circle cx="310.5" cy="315.5" r="1.65"/><circle cx="317.7" cy="315.5" r="1.65"/><circle cx="324.9" cy="315.5" r="1.65"/><circle cx="332.0" cy="315.5" r="1.65"/><circle cx="339.2" cy="314.3" r="1.65"/><circle cx="346.4" cy="314.7" r="1.65"/><circle cx="353.5" cy="315.5" r="1.65"/><circle cx="360.7" cy="315.5" r="1.65"/><circle cx="367.9" cy="316.3" r="1.65"/><circle cx="375.1" cy="316.3" r="1.65"/><circle cx="382.2" cy="316.3" r="1.65"/><circle cx="389.4" cy="316.3" r="1.65"/><circle cx="396.6" cy="316.3" r="1.65"/><circle cx="403.7" cy="315.5" r="1.65"/><circle cx="410.9" cy="314.3" r="1.65"/><circle cx="418.1" cy="313.3" r="1.65"/><circle cx="425.3" cy="311.3" r="1.65"/><circle cx="432.4" cy="310.5" r="1.65"/><circle cx="439.6" cy="308.3" r="1.65"/><circle cx="446.8" cy="306.3" r="1.65"/><circle cx="453.9" cy="303.3" r="1.65"/><circle cx="461.1" cy="301.3" r="1.65"/><circle cx="468.3" cy="299.3" r="1.65"/><circle cx="475.5" cy="296.7" r="1.65"/><circle cx="482.6" cy="294.3" r="1.65"/><circle cx="489.8" cy="292.7" r="1.65"/><circle cx="497.0" cy="290.5" r="1.65"/><circle cx="504.2" cy="289.3" r="1.65"/><circle cx="511.3" cy="287.2" r="1.65"/><circle cx="518.5" cy="286.3" r="1.65"/><circle cx="525.7" cy="285.2" r="1.65"/><circle cx="532.8" cy="284.2" r="1.65"/><circle cx="540.0" cy="282.7" r="1.65"/><circle cx="547.2" cy="281.3" r="1.65"/><circle cx="554.4" cy="280.5" r="1.65"/><circle cx="561.5" cy="280.5" r="1.65"/><circle cx="568.7" cy="279.3" r="1.65"/><circle cx="575.9" cy="279.3" r="1.65"/><circle cx="583.0" cy="280.5" r="1.65"/><circle cx="590.2" cy="281.3" r="1.65"/><circle cx="597.4" cy="282.7" r="1.65"/><circle cx="604.6" cy="284.3" r="1.65"/><circle cx="611.7" cy="285.5" r="1.65"/><circle cx="618.9" cy="286.7" r="1.65"/><circle cx="626.1" cy="287.5" r="1.65"/><circle cx="633.2" cy="288.3" r="1.65"/><circle cx="640.4" cy="288.3" r="1.65"/><circle cx="647.6" cy="288.3" r="1.65"/><circle cx="654.8" cy="287.5" r="1.65"/><circle cx="661.9" cy="287.5" r="1.65"/><circle cx="669.1" cy="286.7" r="1.65"/><circle cx="676.3" cy="286.7" r="1.65"/><circle cx="683.5" cy="286.7" r="1.65"/><circle cx="690.6" cy="287.5" r="1.65"/><circle cx="697.8" cy="287.5" r="1.65"/><circle cx="705.0" cy="288.3" r="1.65"/><circle cx="712.1" cy="288.3" r="1.65"/><circle cx="719.3" cy="288.3" r="1.65"/><circle cx="726.5" cy="289.3" r="1.65"/><circle cx="733.7" cy="290.0" r="1.65"/><circle cx="740.8" cy="290.5" r="1.65"/><circle cx="748.0" cy="291.3" r="1.65"/><circle cx="755.2" cy="292.7" r="1.65"/><circle cx="762.3" cy="293.5" r="1.65"/><circle cx="769.5" cy="294.7" r="1.65"/><circle cx="776.7" cy="295.0" r="1.65"/><circle cx="783.9" cy="295.5" r="1.65"/><circle cx="791.0" cy="296.0" r="1.65"/><circle cx="798.2" cy="297.2" r="1.65"/><circle cx="805.4" cy="297.2" r="1.65"/><circle cx="812.5" cy="297.2" r="1.65"/><circle cx="819.7" cy="298.0" r="1.65"/><circle cx="826.9" cy="298.5" r="1.65"/><circle cx="834.1" cy="298.8" r="1.65"/><circle cx="841.2" cy="299.3" r="1.65"/><circle cx="848.4" cy="300.5" r="1.65"/><circle cx="855.6" cy="301.3" r="1.65"/><circle cx="862.8" cy="302.2" r="1.65"/><circle cx="869.9" cy="303.3" r="1.65"/><circle cx="877.1" cy="304.3" r="1.65"/></g><rect x="17" y="264" width="31" height="12" fill="#3a414a"/><text x="18" y="274" font-family="Liberation Sans" font-size="10.5" fill="#161672" textLength="28" lengthAdjust="spacingAndGlyphs">MACD</text><path d="M16.5 343.2 L23.6 343.2 L30.8 342.2 L38.0 346.5 L45.1 360.0 L52.3 373.5 L59.5 363.0 L66.7 330.0 L73.8 330.5 L81.0 341.0 L88.2 342.0 L95.3 350.2 L102.5 355.7 L109.7 352.3 L116.9 348.2 L124.0 352.3 L131.2 351.3 L138.4 359.3 L145.6 357.3 L152.7 366.3 L159.9 364.7 L167.1 375.7 L174.2 377.3 L181.4 384.3 L188.6 382.3 L195.8 383.0 L202.9 384.7 L210.1 385.2 L217.3 386.3 L224.4 387.3 L231.6 384.8 L238.8 384.8 L246.0 386.5 L253.1 380.2 L260.3 383.5 L267.5 390.2 L274.6 392.7 L281.8 392.7 L289.0 389.3 L296.2 385.2 L303.3 384.7 L310.5 384.3 L317.7 389.0 L324.9 388.5 L332.0 386.8 L339.2 382.7 L346.4 393.5 L353.5 397.3 L360.7 389.3 L367.9 389.0 L375.1 389.0 L382.2 390.2 L389.4 383.0 L396.6 380.7 L403.7 379.7 L410.9 369.3 L418.1 369.3 L425.3 371.3 L432.4 368.0 L439.6 354.7 L446.8 349.7 L453.9 351.0 L461.1 355.7 L468.3 351.3 L475.5 348.5 L482.6 354.7 L489.8 347.3 L497.0 346.8 L504.2 356.3 L511.3 354.3 L518.5 353.0 L525.7 350.7 L532.8 341.0 L540.0 338.5 L547.2 344.0 L554.4 361.0 L561.5 359.0 L568.7 357.3 L575.9 362.3 L583.0 369.0 L590.2 371.0 L597.4 369.3 L604.6 373.5 L611.7 371.0 L618.9 370.2 L626.1 364.7 L633.2 359.0 L640.4 354.7 L647.6 353.0 L654.8 352.3 L661.9 353.5 L669.1 349.0 L676.3 366.8 L683.5 366.3 L690.6 368.5 L697.8 369.7 L705.0 367.7 L712.1 356.3 L719.3 372.2 L726.5 369.2 L733.7 371.0 L740.8 368.5 L748.0 368.5 L755.2 373.0 L762.3 382.7 L769.5 374.7 L776.7 375.2 L783.9 375.2 L791.0 372.7 L798.2 374.3 L805.4 369.7 L812.5 375.2 L819.7 372.3 L826.9 379.3 L834.1 378.5 L841.2 385.2 L848.4 389.3 L855.6 386.8 L862.8 383.5 L869.9 383.5 L877.1 384.7 L877.1 392 L16.5 392 Z" fill="url(#gRsi)" clip-path="url(#cpRsiFill)"/><path d="M23.5 327V400 M66.5 327V400 M109.5 327V400 M152.5 327V400 M195.5 327V400 M238.5 327V400 M281.5 327V400 M324.5 327V400 M367.5 327V400 M403.5 327V400 M425.5 327V400 M468.5 327V400 M511.5 327V400 M568.5 327V400 M611.5 327V400 M654.5 327V400 M697.5 327V400 M740.5 327V400 M783.5 327V400 M826.5 327V400 M869.5 327V400" stroke="#6e7a84" stroke-width="1" stroke-dasharray="3 3" fill="none" shape-rendering="crispEdges"/><rect x="539" y="328" width="1" height="76" fill="#8e9cac"/><rect x="17" y="329" width="17" height="11" fill="#3a414a"/><path d="M15 366.5H888" stroke="#6e7a84" stroke-width="1" stroke-dasharray="3 3" fill="none" shape-rendering="crispEdges"/><rect x="16" y="340" width="861" height="2" fill="#1c1c94"/><rect x="16" y="390" width="861" height="2" fill="#1c1c94"/><g clip-path="url(#cpRsi)"><path d="M16.5 343.2L23.6 343.2" stroke="#ec8c30" stroke-width="0.95" fill="none" stroke-linecap="round"/><path d="M23.6 343.2L30.8 342.2" stroke="#ec8c30" stroke-width="0.95" fill="none" stroke-linecap="round"/><path d="M30.8 342.2L38.0 346.5" stroke="#ec8c30" stroke-width="0.95" fill="none" stroke-linecap="round"/><path d="M38.0 346.5L45.1 360.0" stroke="#ec8c30" stroke-width="0.95" fill="none" stroke-linecap="round"/><path d="M45.1 360.0L52.3 373.5" stroke="#ec8c30" stroke-width="0.95" fill="none" stroke-linecap="round"/><path d="M52.3 373.5L59.5 363.0" stroke="#ec8c30" stroke-width="0.95" fill="none" stroke-linecap="round"/><path d="M59.5 363.0L66.7 330.0" stroke="#d040e0" stroke-width="0.95" fill="none" stroke-linecap="round"/><path d="M66.7 330.0L73.8 330.5" stroke="#d040e0" stroke-width="0.95" fill="none" stroke-linecap="round"/><path d="M73.8 330.5L81.0 341.0" stroke="#d040e0" stroke-width="0.95" fill="none" stroke-linecap="round"/><path d="M81.0 341.0L88.2 342.0" stroke="#ec8c30" stroke-width="0.95" fill="none" stroke-linecap="round"/><path d="M88.2 342.0L95.3 350.2" stroke="#ec8c30" stroke-width="0.95" fill="none" stroke-linecap="round"/><path d="M95.3 350.2L102.5 355.7" stroke="#ec8c30" stroke-width="0.95" fill="none" stroke-linecap="round"/><path d="M102.5 355.7L109.7 352.3" stroke="#ec8c30" stroke-width="0.95" fill="none" stroke-linecap="round"/><path d="M109.7 352.3L116.9 348.2" stroke="#ec8c30" stroke-width="0.95" fill="none" stroke-linecap="round"/><path d="M116.9 348.2L124.0 352.3" stroke="#ec8c30" stroke-width="0.95" fill="none" stroke-linecap="round"/><path d="M124.0 352.3L131.2 351.3" stroke="#ec8c30" stroke-width="0.95" fill="none" stroke-linecap="round"/><path d="M131.2 351.3L138.4 359.3" stroke="#ec8c30" stroke-width="0.95" fill="none" stroke-linecap="round"/><path d="M138.4 359.3L145.6 357.3" stroke="#ec8c30" stroke-width="0.95" fill="none" stroke-linecap="round"/><path d="M145.6 357.3L152.7 366.3" stroke="#ec8c30" stroke-width="0.95" fill="none" stroke-linecap="round"/><path d="M152.7 366.3L159.9 364.7" stroke="#ec8c30" stroke-width="0.95" fill="none" stroke-linecap="round"/><path d="M159.9 364.7L167.1 375.7" stroke="#ec8c30" stroke-width="0.95" fill="none" stroke-linecap="round"/><path d="M167.1 375.7L174.2 377.3" stroke="#ec8c30" stroke-width="0.95" fill="none" stroke-linecap="round"/><path d="M174.2 377.3L181.4 384.3" stroke="#ec8c30" stroke-width="0.95" fill="none" stroke-linecap="round"/><path d="M181.4 384.3L188.6 382.3" stroke="#ec8c30" stroke-width="0.95" fill="none" stroke-linecap="round"/><path d="M188.6 382.3L195.8 383.0" stroke="#ec8c30" stroke-width="0.95" fill="none" stroke-linecap="round"/><path d="M195.8 383.0L202.9 384.7" stroke="#ec8c30" stroke-width="0.95" fill="none" stroke-linecap="round"/><path d="M202.9 384.7L210.1 385.2" stroke="#ec8c30" stroke-width="0.95" fill="none" stroke-linecap="round"/><path d="M210.1 385.2L217.3 386.3" stroke="#ec8c30" stroke-width="0.95" fill="none" stroke-linecap="round"/><path d="M217.3 386.3L224.4 387.3" stroke="#ec8c30" stroke-width="0.95" fill="none" stroke-linecap="round"/><path d="M224.4 387.3L231.6 384.8" stroke="#ec8c30" stroke-width="0.95" fill="none" stroke-linecap="round"/><path d="M231.6 384.8L238.8 384.8" stroke="#ec8c30" stroke-width="0.95" fill="none" stroke-linecap="round"/><path d="M238.8 384.8L246.0 386.5" stroke="#ec8c30" stroke-width="0.95" fill="none" stroke-linecap="round"/><path d="M246.0 386.5L253.1 380.2" stroke="#ec8c30" stroke-width="0.95" fill="none" stroke-linecap="round"/><path d="M253.1 380.2L260.3 383.5" stroke="#ec8c30" stroke-width="0.95" fill="none" stroke-linecap="round"/><path d="M260.3 383.5L267.5 390.2" stroke="#ec8c30" stroke-width="0.95" fill="none" stroke-linecap="round"/><path d="M267.5 390.2L274.6 392.7" stroke="#30d040" stroke-width="0.95" fill="none" stroke-linecap="round"/><path d="M274.6 392.7L281.8 392.7" stroke="#30d040" stroke-width="0.95" fill="none" stroke-linecap="round"/><path d="M281.8 392.7L289.0 389.3" stroke="#ec8c30" stroke-width="0.95" fill="none" stroke-linecap="round"/><path d="M289.0 389.3L296.2 385.2" stroke="#ec8c30" stroke-width="0.95" fill="none" stroke-linecap="round"/><path d="M296.2 385.2L303.3 384.7" stroke="#ec8c30" stroke-width="0.95" fill="none" stroke-linecap="round"/><path d="M303.3 384.7L310.5 384.3" stroke="#ec8c30" stroke-width="0.95" fill="none" stroke-linecap="round"/><path d="M310.5 384.3L317.7 389.0" stroke="#ec8c30" stroke-width="0.95" fill="none" stroke-linecap="round"/><path d="M317.7 389.0L324.9 388.5" stroke="#ec8c30" stroke-width="0.95" fill="none" stroke-linecap="round"/><path d="M324.9 388.5L332.0 386.8" stroke="#ec8c30" stroke-width="0.95" fill="none" stroke-linecap="round"/><path d="M332.0 386.8L339.2 382.7" stroke="#ec8c30" stroke-width="0.95" fill="none" stroke-linecap="round"/><path d="M339.2 382.7L346.4 393.5" stroke="#30d040" stroke-width="0.95" fill="none" stroke-linecap="round"/><path d="M346.4 393.5L353.5 397.3" stroke="#30d040" stroke-width="0.95" fill="none" stroke-linecap="round"/><path d="M353.5 397.3L360.7 389.3" stroke="#ec8c30" stroke-width="0.95" fill="none" stroke-linecap="round"/><path d="M360.7 389.3L367.9 389.0" stroke="#ec8c30" stroke-width="0.95" fill="none" stroke-linecap="round"/><path d="M367.9 389.0L375.1 389.0" stroke="#ec8c30" stroke-width="0.95" fill="none" stroke-linecap="round"/><path d="M375.1 389.0L382.2 390.2" stroke="#ec8c30" stroke-width="0.95" fill="none" stroke-linecap="round"/><path d="M382.2 390.2L389.4 383.0" stroke="#ec8c30" stroke-width="0.95" fill="none" stroke-linecap="round"/><path d="M389.4 383.0L396.6 380.7" stroke="#ec8c30" stroke-width="0.95" fill="none" stroke-linecap="round"/><path d="M396.6 380.7L403.7 379.7" stroke="#ec8c30" stroke-width="0.95" fill="none" stroke-linecap="round"/><path d="M403.7 379.7L410.9 369.3" stroke="#ec8c30" stroke-width="0.95" fill="none" stroke-linecap="round"/><path d="M410.9 369.3L418.1 369.3" stroke="#ec8c30" stroke-width="0.95" fill="none" stroke-linecap="round"/><path d="M418.1 369.3L425.3 371.3" stroke="#ec8c30" stroke-width="0.95" fill="none" stroke-linecap="round"/><path d="M425.3 371.3L432.4 368.0" stroke="#ec8c30" stroke-width="0.95" fill="none" stroke-linecap="round"/><path d="M432.4 368.0L439.6 354.7" stroke="#ec8c30" stroke-width="0.95" fill="none" stroke-linecap="round"/><path d="M439.6 354.7L446.8 349.7" stroke="#ec8c30" stroke-width="0.95" fill="none" stroke-linecap="round"/><path d="M446.8 349.7L453.9 351.0" stroke="#ec8c30" stroke-width="0.95" fill="none" stroke-linecap="round"/><path d="M453.9 351.0L461.1 355.7" stroke="#ec8c30" stroke-width="0.95" fill="none" stroke-linecap="round"/><path d="M461.1 355.7L468.3 351.3" stroke="#ec8c30" stroke-width="0.95" fill="none" stroke-linecap="round"/><path d="M468.3 351.3L475.5 348.5" stroke="#ec8c30" stroke-width="0.95" fill="none" stroke-linecap="round"/><path d="M475.5 348.5L482.6 354.7" stroke="#ec8c30" stroke-width="0.95" fill="none" stroke-linecap="round"/><path d="M482.6 354.7L489.8 347.3" stroke="#ec8c30" stroke-width="0.95" fill="none" stroke-linecap="round"/><path d="M489.8 347.3L497.0 346.8" stroke="#ec8c30" stroke-width="0.95" fill="none" stroke-linecap="round"/><path d="M497.0 346.8L504.2 356.3" stroke="#ec8c30" stroke-width="0.95" fill="none" stroke-linecap="round"/><path d="M504.2 356.3L511.3 354.3" stroke="#ec8c30" stroke-width="0.95" fill="none" stroke-linecap="round"/><path d="M511.3 354.3L518.5 353.0" stroke="#ec8c30" stroke-width="0.95" fill="none" stroke-linecap="round"/><path d="M518.5 353.0L525.7 350.7" stroke="#ec8c30" stroke-width="0.95" fill="none" stroke-linecap="round"/><path d="M525.7 350.7L532.8 341.0" stroke="#d040e0" stroke-width="0.95" fill="none" stroke-linecap="round"/><path d="M532.8 341.0L540.0 338.5" stroke="#d040e0" stroke-width="0.95" fill="none" stroke-linecap="round"/><path d="M540.0 338.5L547.2 344.0" stroke="#ec8c30" stroke-width="0.95" fill="none" stroke-linecap="round"/><path d="M547.2 344.0L554.4 361.0" stroke="#ec8c30" stroke-width="0.95" fill="none" stroke-linecap="round"/><path d="M554.4 361.0L561.5 359.0" stroke="#ec8c30" stroke-width="0.95" fill="none" stroke-linecap="round"/><path d="M561.5 359.0L568.7 357.3" stroke="#ec8c30" stroke-width="0.95" fill="none" stroke-linecap="round"/><path d="M568.7 357.3L575.9 362.3" stroke="#ec8c30" stroke-width="0.95" fill="none" stroke-linecap="round"/><path d="M575.9 362.3L583.0 369.0" stroke="#ec8c30" stroke-width="0.95" fill="none" stroke-linecap="round"/><path d="M583.0 369.0L590.2 371.0" stroke="#ec8c30" stroke-width="0.95" fill="none" stroke-linecap="round"/><path d="M590.2 371.0L597.4 369.3" stroke="#ec8c30" stroke-width="0.95" fill="none" stroke-linecap="round"/><path d="M597.4 369.3L604.6 373.5" stroke="#ec8c30" stroke-width="0.95" fill="none" stroke-linecap="round"/><path d="M604.6 373.5L611.7 371.0" stroke="#ec8c30" stroke-width="0.95" fill="none" stroke-linecap="round"/><path d="M611.7 371.0L618.9 370.2" stroke="#ec8c30" stroke-width="0.95" fill="none" stroke-linecap="round"/><path d="M618.9 370.2L626.1 364.7" stroke="#ec8c30" stroke-width="0.95" fill="none" stroke-linecap="round"/><path d="M626.1 364.7L633.2 359.0" stroke="#ec8c30" stroke-width="0.95" fill="none" stroke-linecap="round"/><path d="M633.2 359.0L640.4 354.7" stroke="#ec8c30" stroke-width="0.95" fill="none" stroke-linecap="round"/><path d="M640.4 354.7L647.6 353.0" stroke="#ec8c30" stroke-width="0.95" fill="none" stroke-linecap="round"/><path d="M647.6 353.0L654.8 352.3" stroke="#ec8c30" stroke-width="0.95" fill="none" stroke-linecap="round"/><path d="M654.8 352.3L661.9 353.5" stroke="#ec8c30" stroke-width="0.95" fill="none" stroke-linecap="round"/><path d="M661.9 353.5L669.1 349.0" stroke="#ec8c30" stroke-width="0.95" fill="none" stroke-linecap="round"/><path d="M669.1 349.0L676.3 366.8" stroke="#ec8c30" stroke-width="0.95" fill="none" stroke-linecap="round"/><path d="M676.3 366.8L683.5 366.3" stroke="#ec8c30" stroke-width="0.95" fill="none" stroke-linecap="round"/><path d="M683.5 366.3L690.6 368.5" stroke="#ec8c30" stroke-width="0.95" fill="none" stroke-linecap="round"/><path d="M690.6 368.5L697.8 369.7" stroke="#ec8c30" stroke-width="0.95" fill="none" stroke-linecap="round"/><path d="M697.8 369.7L705.0 367.7" stroke="#ec8c30" stroke-width="0.95" fill="none" stroke-linecap="round"/><path d="M705.0 367.7L712.1 356.3" stroke="#ec8c30" stroke-width="0.95" fill="none" stroke-linecap="round"/><path d="M712.1 356.3L719.3 372.2" stroke="#ec8c30" stroke-width="0.95" fill="none" stroke-linecap="round"/><path d="M719.3 372.2L726.5 369.2" stroke="#ec8c30" stroke-width="0.95" fill="none" stroke-linecap="round"/><path d="M726.5 369.2L733.7 371.0" stroke="#ec8c30" stroke-width="0.95" fill="none" stroke-linecap="round"/><path d="M733.7 371.0L740.8 368.5" stroke="#ec8c30" stroke-width="0.95" fill="none" stroke-linecap="round"/><path d="M740.8 368.5L748.0 368.5" stroke="#ec8c30" stroke-width="0.95" fill="none" stroke-linecap="round"/><path d="M748.0 368.5L755.2 373.0" stroke="#ec8c30" stroke-width="0.95" fill="none" stroke-linecap="round"/><path d="M755.2 373.0L762.3 382.7" stroke="#ec8c30" stroke-width="0.95" fill="none" stroke-linecap="round"/><path d="M762.3 382.7L769.5 374.7" stroke="#ec8c30" stroke-width="0.95" fill="none" stroke-linecap="round"/><path d="M769.5 374.7L776.7 375.2" stroke="#ec8c30" stroke-width="0.95" fill="none" stroke-linecap="round"/><path d="M776.7 375.2L783.9 375.2" stroke="#ec8c30" stroke-width="0.95" fill="none" stroke-linecap="round"/><path d="M783.9 375.2L791.0 372.7" stroke="#ec8c30" stroke-width="0.95" fill="none" stroke-linecap="round"/><path d="M791.0 372.7L798.2 374.3" stroke="#ec8c30" stroke-width="0.95" fill="none" stroke-linecap="round"/><path d="M798.2 374.3L805.4 369.7" stroke="#ec8c30" stroke-width="0.95" fill="none" stroke-linecap="round"/><path d="M805.4 369.7L812.5 375.2" stroke="#ec8c30" stroke-width="0.95" fill="none" stroke-linecap="round"/><path d="M812.5 375.2L819.7 372.3" stroke="#ec8c30" stroke-width="0.95" fill="none" stroke-linecap="round"/><path d="M819.7 372.3L826.9 379.3" stroke="#ec8c30" stroke-width="0.95" fill="none" stroke-linecap="round"/><path d="M826.9 379.3L834.1 378.5" stroke="#ec8c30" stroke-width="0.95" fill="none" stroke-linecap="round"/><path d="M834.1 378.5L841.2 385.2" stroke="#ec8c30" stroke-width="0.95" fill="none" stroke-linecap="round"/><path d="M841.2 385.2L848.4 389.3" stroke="#ec8c30" stroke-width="0.95" fill="none" stroke-linecap="round"/><path d="M848.4 389.3L855.6 386.8" stroke="#ec8c30" stroke-width="0.95" fill="none" stroke-linecap="round"/><path d="M855.6 386.8L862.8 383.5" stroke="#ec8c30" stroke-width="0.95" fill="none" stroke-linecap="round"/><path d="M862.8 383.5L869.9 383.5" stroke="#ec8c30" stroke-width="0.95" fill="none" stroke-linecap="round"/><path d="M869.9 383.5L877.1 384.7" stroke="#ec8c30" stroke-width="0.95" fill="none" stroke-linecap="round"/></g><text x="18" y="339" font-family="Liberation Sans" font-size="11.2" fill="#ec9040" textLength="14" lengthAdjust="spacingAndGlyphs">RSI</text><path d="M23.5 400V404 M66.5 400V404 M109.5 400V404 M152.5 400V404 M195.5 400V404 M238.5 400V404 M281.5 400V404 M324.5 400V404 M367.5 400V404 M403.5 400V404 M425.5 400V404 M468.5 400V404 M511.5 400V404 M539.5 400V404 M568.5 400V404 M611.5 400V404 M654.5 400V404 M697.5 400V404 M740.5 400V404 M783.5 400V404 M826.5 400V404 M869.5 400V404" stroke="#b8c8d8" stroke-width="1" shape-rendering="crispEdges"/><text x="11.1" y="423" font-family="Liberation Sans" font-size="11" fill="#f4f4f0" stroke="#f4f4f0" stroke-width="0.25">12/Чт</text><text x="54.1" y="423" font-family="Liberation Sans" font-size="11" fill="#f4f4f0" stroke="#f4f4f0" stroke-width="0.25">13/Пт</text><text x="97.2" y="423" font-family="Liberation Sans" font-size="11" fill="#f4f4f0" stroke="#f4f4f0" stroke-width="0.25">16/Пн</text><text x="140.3" y="423" font-family="Liberation Sans" font-size="11" fill="#f4f4f0" stroke="#f4f4f0" stroke-width="0.25">17/Вт</text><text x="183.3" y="423" font-family="Liberation Sans" font-size="11" fill="#f4f4f0" stroke="#f4f4f0" stroke-width="0.25">18/Ср</text><text x="226.2" y="423" font-family="Liberation Sans" font-size="11" fill="#f4f4f0" stroke="#f4f4f0" stroke-width="0.25">19/Чт</text><text x="269.3" y="423" font-family="Liberation Sans" font-size="11" fill="#f4f4f0" stroke="#f4f4f0" stroke-width="0.25">20/Пт</text><text x="312.4" y="423" font-family="Liberation Sans" font-size="11" fill="#f4f4f0" stroke="#f4f4f0" stroke-width="0.25">23/Пн</text><text x="355.3" y="423" font-family="Liberation Sans" font-size="11" fill="#f4f4f0" stroke="#f4f4f0" stroke-width="0.25">24/Вт</text><text x="391.1" y="423" font-family="Liberation Sans" font-size="11" fill="#f4f4f0" stroke="#f4f4f0" stroke-width="0.25">26/Чт</text><text x="413.2" y="423" font-family="Liberation Sans" font-size="11" fill="#f4f4f0" stroke="#f4f4f0" stroke-width="0.25">27/Пт</text><text x="456.2" y="423" font-family="Liberation Sans" font-size="11" fill="#f4f4f0" stroke="#f4f4f0" stroke-width="0.25">30/Пн</text><text x="499.3" y="423" font-family="Liberation Sans" font-size="11" fill="#f4f4f0" stroke="#f4f4f0" stroke-width="0.25">31/Вт</text><text x="533.7" y="423" font-family="Liberation Sans" font-size="11" fill="#f4f4f0" stroke="#f4f4f0" stroke-width="0.25">2/Чт</text><text x="562.2" y="423" font-family="Liberation Sans" font-size="11" fill="#f4f4f0" stroke="#f4f4f0" stroke-width="0.25">3/Пт</text><text x="605.4" y="423" font-family="Liberation Sans" font-size="11" fill="#f4f4f0" stroke="#f4f4f0" stroke-width="0.25">6/Пн</text><text x="648.3" y="423" font-family="Liberation Sans" font-size="11" fill="#f4f4f0" stroke="#f4f4f0" stroke-width="0.25">7/Вт</text><text x="691.3" y="423" font-family="Liberation Sans" font-size="11" fill="#f4f4f0" stroke="#f4f4f0" stroke-width="0.25">8/Ср</text><text x="734.3" y="423" font-family="Liberation Sans" font-size="11" fill="#f4f4f0" stroke="#f4f4f0" stroke-width="0.25">9/Чт</text><text x="771.3" y="423" font-family="Liberation Sans" font-size="11" fill="#f4f4f0" stroke="#f4f4f0" stroke-width="0.25">10/Пт</text><text x="814.3" y="423" font-family="Liberation Sans" font-size="11" fill="#f4f4f0" stroke="#f4f4f0" stroke-width="0.25">13/Пн</text><text x="857.4" y="423" font-family="Liberation Sans" font-size="11" fill="#f4f4f0" stroke="#f4f4f0" stroke-width="0.25">14/Вт</text><rect x="15" y="377" width="1.5" height="27" fill="#c8dce0"/><rect x="539" y="396" width="1.5" height="8" fill="#c8dce0"/><rect x="16.5" y="377.5" width="59" height="19" rx="2" fill="#5a6a80" stroke="#a0b4c4" stroke-width="1"/><text x="23" y="391" font-family="Liberation Sans" font-size="11" fill="#f0f0f0" stroke="#f0f0f0" stroke-width="0.25">Дек 2019</text><rect x="539.5" y="377.5" width="61" height="19" rx="2" fill="#5a6a80" stroke="#a0b4c4" stroke-width="1"/><text x="546" y="391" font-family="Liberation Sans" font-size="11" fill="#f0f0f0" stroke="#f0f0f0" stroke-width="0.25">Янв 2020</text><rect x="15" y="36" width="31" height="22" fill="#f2f2f0"/><rect x="15" y="36" width="31" height="5" fill="#d4d2d2"/><rect x="19" y="44" width="10" height="10" rx="2" fill="url(#gSq1)" stroke="#a01010" stroke-width="0.6"/><rect x="32" y="44" width="10" height="10" rx="2" fill="url(#gSq2)" stroke="#1060a0" stroke-width="0.6"/></svg>
</div>
</body></html>
